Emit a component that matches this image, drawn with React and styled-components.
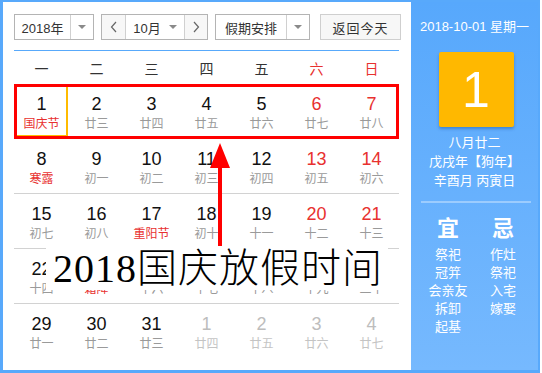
import styled, { createGlobalStyle } from 'styled-components'

const BLUE = '#58a9fb'
const RED = '#e8312f'

const GlobalStyle = createGlobalStyle`
  html, body {
    margin: 0;
    padding: 0;
    background: #fff;
  }
  body {
    font-family: "Liberation Sans", "Noto Sans CJK SC", Arial, sans-serif;
  }
`

const Wrapper = styled.div`
  position: relative;
  width: 540px;
  height: 373px;
  box-sizing: border-box;
  border: 2px solid ${ BLUE };
  border-left-width: 3px;
  border-bottom-width: 3px;
  display: flex;
  background: #fff;
`

const Main = styled.div`
  width: 408px;
  box-sizing: border-box;
  padding: 12px 10px 0 11px;
`

const Toolbar = styled.div`
  display: flex;
  height: 26px;
`

const Select = styled.div`
  display: flex;
  height: 26px;
  box-sizing: border-box;
  border: 1px solid #b4b4b4;
  background: #fff;
  margin-right: ${ p => p.gap || 7 }px;
`

const SelectText = styled.div`
  width: ${ p => p.w }px;
  display: flex;
  align-items: center;
  justify-content: center;
  font-size: 13px;
  color: #333;
  border-right: 1px solid #d0d0d0;
`

const ArrowPart = styled.div`
  width: ${ p => p.w || 23 }px;
  display: flex;
  align-items: center;
  justify-content: center;
  &::after {
    content: '';
    border-left: 4px solid transparent;
    border-right: 4px solid transparent;
    border-top: 4px solid #8a8a8a;
  }
`

const NavButton = styled.div`
  width: ${ p => p.w }px;
  display: flex;
  align-items: center;
  justify-content: center;
  background: #f7f7f7;
  border-right: ${ p => p.last ? 'none' : '1px solid #d0d0d0' };
`

const MonthPart = styled.div`
  width: 58px;
  display: flex;
  align-items: center;
  justify-content: center;
  gap: 8px;
  font-size: 13px;
  color: #333;
  border-right: 1px solid #d0d0d0;
  &::after {
    content: '';
    border-left: 4px solid transparent;
    border-right: 4px solid transparent;
    border-top: 4px solid #8a8a8a;
  }
`

const TodayButton = styled.div`
  width: 82px;
  height: 26px;
  box-sizing: border-box;
  border: 1px solid #cfcfcf;
  background: #f7f7f7;
  display: flex;
  align-items: center;
  justify-content: center;
  font-size: 13px;
  color: #333;
  letter-spacing: 1px;
`

const BlueLine = styled.div`
  height: 1px;
  width: 385px;
  background: ${ BLUE };
  margin-top: 10px;
`

const Grid = styled.div`
  width: 385px;
  display: grid;
  grid-template-columns: repeat(7, 55px);
`

const WeekDay = styled.div`
  height: 33px;
  display: flex;
  align-items: center;
  justify-content: center;
  font-size: 14px;
  color: ${ p => p.weekend ? RED : '#333' };
`

const Row = styled.div`
  grid-column: 1 / -1;
  display: grid;
  grid-template-columns: repeat(7, 55px);
  height: 55px;
  box-sizing: border-box;
  border-bottom: ${ p => p.last ? 'none' : '1px solid #d2d2d2' };
`

const Cell = styled.div`
  display: flex;
  flex-direction: column;
  align-items: center;
  padding-top: 10px;
  box-sizing: border-box;
  position: relative;
  ${ p => p.today && `
    &::before {
      content: '';
      position: absolute;
      left: 1px;
      top: 1px;
      width: 53px;
      height: 52px;
      box-sizing: border-box;
      border: 2px solid #ffbb00;
    }
  ` }
`

const DayNum = styled.div`
  font-size: 18px;
  line-height: 20px;
  color: ${ p => p.other ? '#bdbdbd' : p.weekend ? RED : '#111' };
`

const Lunar = styled.div`
  font-size: 12px;
  line-height: 16px;
  margin-top: 2px;
  color: ${ p => p.other ? '#c4c4c4' : p.fest ? RED : '#9a9a9a' };
`

const Side = styled.div`
  width: 128px;
  background: linear-gradient(to bottom, #57a8fc, #76b9fe);
  color: #fff;
  display: flex;
  flex-direction: column;
  align-items: center;
  padding: 16px 0 0 0;
  box-sizing: border-box;
`

const SideDate = styled.div`
  font-size: 13px;
  line-height: 18px;
`

const BigDay = styled.div`
  width: 75px;
  height: 75px;
  margin: 16px 0 0 3px;
  background: #ffb800;
  border-radius: 2px;
  box-shadow: 0 2px 3px rgba(0, 60, 140, 0.35);
  display: flex;
  align-items: center;
  justify-content: center;
  font-size: 50px;
  line-height: 1;
`

const LunarInfo = styled.div`
  margin-top: 6px;
  font-size: 13px;
  line-height: 19px;
  text-align: center;
`

const SideDivider = styled.div`
  width: 110px;
  height: 2px;
  background: rgba(255, 255, 255, 0.35);
  margin: 11px 0 0 2px;
`

const Advice = styled.div`
  display: grid;
  grid-template-columns: 55px 55px;
  margin-left: 2px;
  margin-top: 12px;
`

const AdviceCol = styled.div`
  display: flex;
  flex-direction: column;
  align-items: center;
`

const AdviceTitle = styled.div`
  font-size: 22px;
  font-weight: bold;
  line-height: 28px;
  margin-bottom: 3px;
`

const AdviceItem = styled.div`
  font-size: 13px;
  line-height: 18px;
`

const RedBox = styled.div`
  position: absolute;
  left: 11px;
  top: 82px;
  width: 385px;
  height: 55px;
  box-sizing: border-box;
  border: 3px solid #ff0000;
  pointer-events: none;
`

const Arrow = styled.svg`
  position: absolute;
  left: 202px;
  top: 139px;
`

const Caption = styled.div`
  position: absolute;
  left: 43px;
  top: 246px;
  width: 342px;
  height: 42px;
  background: #fff;
  padding-left: 7px;
  box-sizing: border-box;
  font-family: "Liberation Serif", "Noto Sans CJK SC", serif;
  font-size: 40px;
  font-weight: 300;
  letter-spacing: 1px;
  line-height: 42px;
  color: #000;
  white-space: nowrap;
`

const weeks = ['一', '二', '三', '四', '五', '六', '日']

const rows = [
  [['1', '国庆节', 'f'], ['2', '廿三'], ['3', '廿四'], ['4', '廿五'], ['5', '廿六'], ['6', '廿七'], ['7', '廿八']],
  [['8', '寒露', 'f'], ['9', '初一'], ['10', '初二'], ['11', '初三'], ['12', '初四'], ['13', '初五'], ['14', '初六']],
  [['15', '初七'], ['16', '初八'], ['17', '重阳节', 'f'], ['18', '初十'], ['19', '十一'], ['20', '十二'], ['21', '十三']],
  [['22', '十四'], ['23', '霜降', 'f'], ['24', '十六'], ['25', '十七'], ['26', '十八'], ['27', '十九'], ['28', '二十']],
  [['29', '廿一'], ['30', '廿二'], ['31', '廿三'], ['1', '廿四', 'o'], ['2', '廿五', 'o'], ['3', '廿六', 'o'], ['4', '廿七', 'o']],
]

const yi = ['祭祀', '冠笄', '会亲友', '拆卸', '起基']
const ji = ['作灶', '祭祀', '入宅', '嫁娶']

const Chevron = ({ dir }) => (
  <svg width="8" height="12" viewBox="0 0 8 12">
    <polyline
      points={dir === 'left' ? '6,1 1.5,6 6,11' : '2,1 6.5,6 2,11'}
      fill="none"
      stroke="#666"
      strokeWidth="1.2"
    />
  </svg>
)

export default function App() {
  return (
    <>
      <GlobalStyle />
      <Wrapper>
        <Main>
          <Toolbar>
            <Select>
              <SelectText w={55}>2018年</SelectText>
              <ArrowPart w={22} />
            </Select>
            <Select>
              <NavButton w={23}><Chevron dir="left" /></NavButton>
              <MonthPart>10月</MonthPart>
              <NavButton w={22} last><Chevron dir="right" /></NavButton>
            </Select>
            <Select gap={10}>
              <SelectText w={70}>假期安排</SelectText>
              <ArrowPart w={22} />
            </Select>
            <TodayButton>返回今天</TodayButton>
          </Toolbar>
          <BlueLine />
          <Grid>
            {weeks.map((w, i) => (
              <WeekDay key={w} weekend={i > 4}>{w}</WeekDay>
            ))}
            {rows.map((row, r) => (
              <Row key={r} last={r === rows.length - 1}>
                {row.map(([num, lunar, flag], c) => (
                  <Cell key={c} today={r === 0 && c === 0}>
                    <DayNum weekend={c > 4} other={flag === 'o'}>{num}</DayNum>
                    <Lunar fest={flag === 'f'} other={flag === 'o'}>{lunar}</Lunar>
                  </Cell>
                ))}
              </Row>
            ))}
          </Grid>
        </Main>
        <Side>
          <SideDate>2018-10-01 星期一</SideDate>
          <BigDay>1</BigDay>
          <LunarInfo>
            八月廿二<br />
            戊戌年【狗年】<br />
            辛酉月 丙寅日
          </LunarInfo>
          <SideDivider />
          <Advice>
            <AdviceCol>
              <AdviceTitle>宜</AdviceTitle>
              {yi.map(t => <AdviceItem key={t}>{t}</AdviceItem>)}
            </AdviceCol>
            <AdviceCol>
              <AdviceTitle>忌</AdviceTitle>
              {ji.map(t => <AdviceItem key={t}>{t}</AdviceItem>)}
            </AdviceCol>
          </Advice>
        </Side>
        <RedBox />
        <Arrow width="30" height="106" viewBox="0 0 30 106">
          <polygon points="15,2 5,27 25,27" fill="#ff0000" />
          <rect x="13" y="25" width="4" height="80" fill="#ff0000" />
        </Arrow>
        <Caption>2018国庆放假时间</Caption>
      </Wrapper>
    </>
  )
}
